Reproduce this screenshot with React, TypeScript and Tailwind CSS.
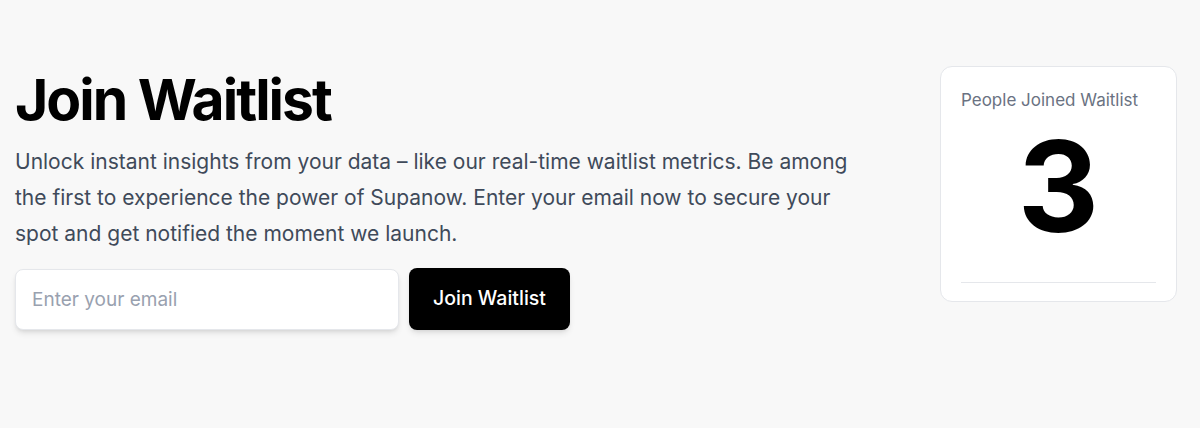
import React from 'react';

export default function App() {
  return (
    <div
      className="min-h-screen bg-[#f8f8f8] text-black"
      style={{ fontFamily: 'Inter, "Noto Sans", sans-serif' }}
    >
      <div className="flex items-start justify-between pl-[15px] pr-[23px] pt-[66px]">
        <div className="w-[860px] pt-[4px]">
          <h1 className="text-[57px] font-bold leading-[60px] tracking-[-0.035em]">Join Waitlist</h1>
          <p className="mt-[14px] text-[21px] leading-[36px] text-[#3f4a5a]">
            Unlock instant insights from your data – like our real-time waitlist metrics. Be among the first to
            experience the power of Supanow. Enter your email now to secure your spot and get notified the moment
            we launch.
          </p>
          <form className="mt-[16px] flex items-center gap-[10px]" onSubmit={(e) => e.preventDefault()}>
            <input
              type="email"
              placeholder="Enter your email"
              className="h-[61px] w-[384px] rounded-lg border border-gray-200 bg-white px-[16px] text-[19px] shadow-md outline-none placeholder:text-gray-400"
            />
            <button
              type="submit"
              className="h-[62px] w-[161px] rounded-lg bg-black text-[19.5px] font-medium text-white shadow-md"
            >
              Join Waitlist
            </button>
          </form>
        </div>
        <div className="w-[237px] h-[236px] rounded-xl border border-gray-200 bg-white px-[20px] pt-[21px]">
          <div className="text-[17px] leading-[24px] text-gray-500">People Joined Waitlist</div>
          <div className="mt-[11px] text-center text-[126px] font-bold leading-[126px]">3</div>
          <div className="mt-[33px] border-t border-gray-200" />
        </div>
      </div>
    </div>
  );
}
